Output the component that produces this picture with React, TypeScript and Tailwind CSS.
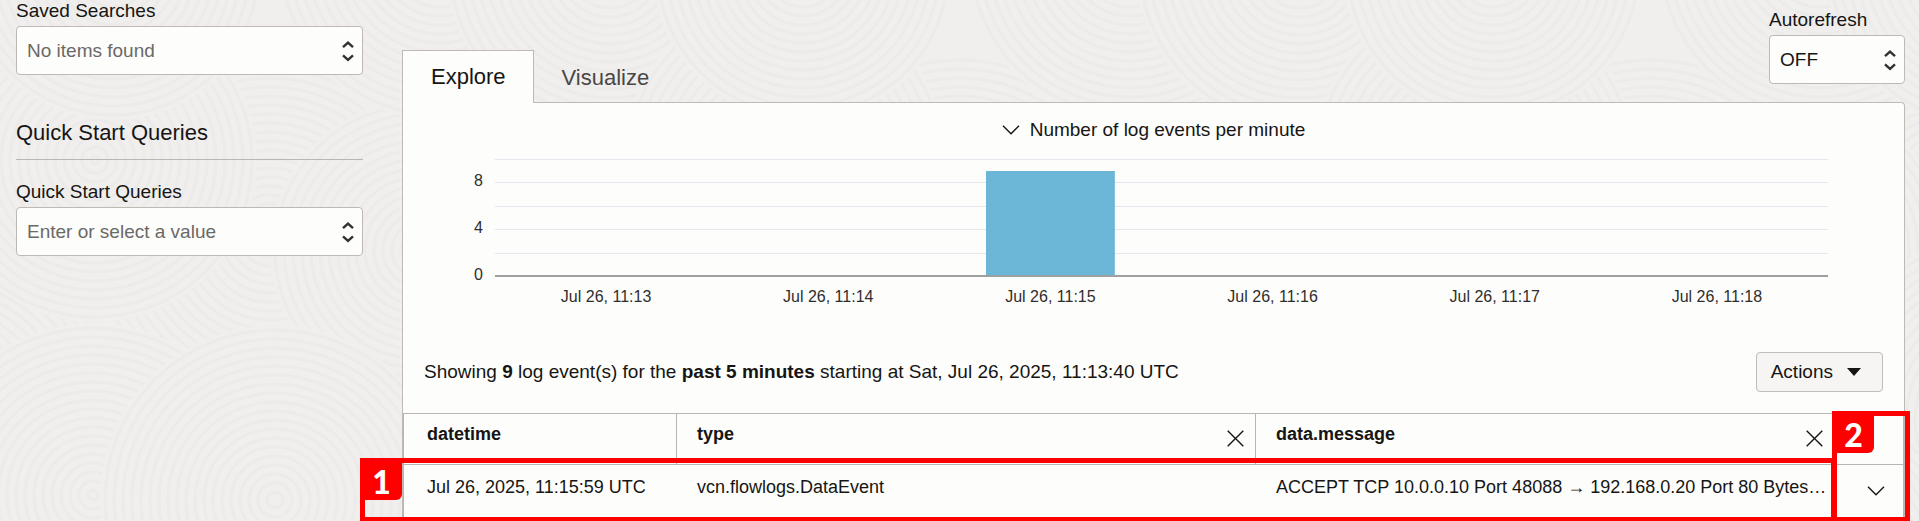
import React, { useState } from 'react';

const logEvents = [
  {
    id: 1,
    datetime: 'Jul 26, 2025, 11:15:59 UTC',
    type: 'vcn.flowlogs.DataEvent',
    message: 'ACCEPT TCP 10.0.0.10 Port 48088 → 192.168.0.20 Port 80 Bytes…',
  },
];

const chartData = [
  { label: 'Jul 26, 11:13', count: 0 },
  { label: 'Jul 26, 11:14', count: 0 },
  { label: 'Jul 26, 11:15', count: 9 },
  { label: 'Jul 26, 11:16', count: 0 },
  { label: 'Jul 26, 11:17', count: 0 },
  { label: 'Jul 26, 11:18', count: 0 },
];

// [cx, cy, radius] of every ring group in one tile, drawn back to front
const ringGroups = [
  [560, 180, 210],
  [270, 235, 180],
  [420, 250, 150],
  [95, 160, 162],
  [113, -30, 150],
  [440, -45, 165],
  [610, -35, 165],
  [630, 420, 190],
  [440, 560, 150],
  [93, 495, 172],
  [275, 500, 175],
];

const TILE_WIDTH = 690;

function Background() {
  return (
    <svg className="absolute inset-0 w-full h-full" aria-hidden="true">
      {[-1, 0, 1, 2].map((tile) =>
        ringGroups.map(([x, cy, r], i) => {
          const cx = x + tile * TILE_WIDTH;
          return (
            <g key={`${tile}-${i}`} stroke="#ecebe9" strokeWidth="3">
              <circle cx={cx} cy={cy} r={r} fill="#f0efee" stroke="none" />
              {Array.from({ length: Math.floor(r / 9) }, (_, n) => (
                <circle key={n} cx={cx} cy={cy} r={r - (n + 1) * 9 + 4} fill="none" />
              ))}
            </g>
          );
        })
      )}
    </svg>
  );
}

function Chevron() {
  return (
    <svg width="18" height="10" viewBox="0 0 18 10" fill="none" stroke="#161513" strokeWidth="1.4">
      <path d="M1 0.8L9 8.8L17 0.8" />
    </svg>
  );
}

function SelectField({ id, label, options, muted = false }: { id: string; label: string; options: string[]; muted?: boolean }) {
  return (
    <div>
      <label htmlFor={id} className="block mb-1 text-[19px] leading-[22px]">
        {label}
      </label>
      <div className="relative">
        <select
          id={id}
          className={`block w-full h-[49px] pl-[10px] pr-9 pt-px appearance-none rounded border border-[#bfb9b4] bg-[#fdfdfc] text-[19px] leading-6 ${
            muted ? 'text-[#6b6966]' : 'text-[#161513]'
          }`}
        >
          {options.map((option) => (
            <option key={option}>{option}</option>
          ))}
        </select>
        <svg
          className="absolute right-[9px] top-[14px] pointer-events-none"
          width="12"
          height="22"
          viewBox="0 0 12 22"
          fill="none"
          stroke="#33302e"
          strokeWidth="2.4"
        >
          <path d="M1 7.2L6 2.6L11 7.2M1 15.3L6 19.9L11 15.3" />
        </svg>
      </div>
    </div>
  );
}

function EventsChart() {
  const step = 100 / chartData.length;
  const yFor = (value: number) => Math.round(118 - value * 11.7);

  return (
    <div className="mt-4 ml-[92px] mr-[76px]">
      <svg className="block w-full h-[160px] overflow-visible text-[16px]" role="img" aria-label="Number of log events per minute">
        {[2, 4, 6, 8, 10].map((v) => (
          <line key={v} x1="0" x2="100%" y1={yFor(v) + 0.5} y2={yFor(v) + 0.5} stroke="#e4e8ec" />
        ))}
        {[0, 4, 8].map((v) => (
          <text key={v} x="-12" y={yFor(v) + 4} textAnchor="end" fill="#302e2c">
            {v}
          </text>
        ))}
        {chartData.map((d, i) => (
          <g key={d.label}>
            {d.count > 0 && (
              <rect
                x={`${(i + 0.21) * step}%`}
                y={yFor(d.count)}
                width={`${step * 0.58}%`}
                height={118 - yFor(d.count)}
                fill="#6cb6d7"
              />
            )}
            <text x={`${(i + 0.5) * step}%`} y="144" textAnchor="middle" fill="#302e2c">
              {d.label}
            </text>
          </g>
        ))}
        <line x1="0" x2="100%" y1="118" y2="118" stroke="#9e9fa0" strokeWidth="2" />
      </svg>
    </div>
  );
}

function RemoveColumnButton({ column }: { column: string }) {
  return (
    <button aria-label={`Remove ${column}`} className="h-12 flex items-center cursor-pointer">
      <svg width="17" height="17" viewBox="0 0 17 17" stroke="#161513" strokeWidth="1.4">
        <path d="M0.7 0.7L16.3 16.3M16.3 0.7L0.7 16.3" />
      </svg>
    </button>
  );
}

function EventsTable() {
  return (
    <table className="w-full table-fixed border-separate border-spacing-0 border-t border-x border-[#b9b6b1] text-[18px] leading-6">
      <thead>
        <tr className="text-left">
          <th className="w-[272px] p-0 pl-[23px] align-top">
            <div className="h-[50px] pt-2">datetime</div>
          </th>
          <th className="p-0 pl-5 pr-[11px] border-l border-[#b9b6b1]">
            <div className="h-[50px] flex justify-between">
              <span className="pt-2">type</span>
              <RemoveColumnButton column="type" />
            </div>
          </th>
          <th className="p-0 pl-5 pr-[11px] border-l border-[#b9b6b1]">
            <div className="h-[50px] flex justify-between">
              <span className="pt-2">data.message</span>
              <RemoveColumnButton column="data.message" />
            </div>
          </th>
          <th className="w-[69px] p-0" aria-label="Details" />
        </tr>
      </thead>
      <tbody>
        {logEvents.map((event) => (
          <tr key={event.id} className="h-[58px] align-top">
            <td className="p-0 pl-[23px] pt-[10px] border-t border-[#b9b6b1] whitespace-nowrap">{event.datetime}</td>
            <td className="p-0 pl-[21px] pt-[10px] border-t border-[#b9b6b1]">{event.type}</td>
            <td className="p-0 pl-[21px] pt-[10px] border-t border-[#b9b6b1] whitespace-nowrap overflow-hidden">
              {event.message}
            </td>
            <td className="p-0 border-t border-[#b9b6b1]">
              <button aria-label="Show details" className="ml-auto mr-[18px] h-[51px] flex items-center cursor-pointer">
                <Chevron />
              </button>
            </td>
          </tr>
        ))}
      </tbody>
    </table>
  );
}

// Numbered red frame that points out a step
function Callout({ step, className }: { step: number; className: string }) {
  return (
    <div className={`absolute border-[5px] border-[#ff0000] pointer-events-none ${className}`}>
      <span className="flex items-center justify-center w-[37px] h-[37px] rounded-br-md bg-[#ff0000] pr-1 font-[Lato,sans-serif] font-black text-[32px] leading-8 text-white">
        {step}
      </span>
    </div>
  );
}

export default function App() {
  const [tab, setTab] = useState('Explore');

  return (
    <div className="relative min-h-screen overflow-hidden bg-[#f0efee] font-['Liberation_Sans',Arial,sans-serif] text-[#161513]">
      <Background />

      <div className="relative flex pl-4 pr-[14px] gap-[39px]">
        <aside className="w-[347px] shrink-0">
          <SelectField id="saved-searches" label="Saved Searches" options={['No items found']} muted />
          <h2 className="mt-11 mb-[21px] pb-3 border-b border-[#b9b6b1] text-[22px] leading-7">Quick Start Queries</h2>
          <SelectField id="quick-start" label="Quick Start Queries" options={['Enter or select a value']} muted />
        </aside>

        <main className="flex-1 min-w-0">
          <div className="flex justify-between">
            <div role="tablist" className="flex items-end text-[22px] leading-7">
              {['Explore', 'Visualize'].map((name) => (
                <button
                  key={name}
                  role="tab"
                  aria-selected={tab === name}
                  onClick={() => setTab(name)}
                  className={
                    tab === name
                      ? 'relative z-10 h-[53px] -mb-px pl-7 pr-[27px] border border-b-0 border-[#bfb9b4] bg-[#fdfdfc]'
                      : 'h-12 pl-7 pr-[27px] text-[#4a4744] cursor-pointer'
                  }
                >
                  {name}
                </button>
              ))}
            </div>
            <div className="w-[136px] pt-[9px] pb-[18px]">
              <SelectField id="autorefresh" label="Autorefresh" options={['OFF']} />
            </div>
          </div>

          <section className="border border-b-0 border-[#bfb9b4] rounded-tr bg-[#fdfdfc]">
            <button className="mt-[15px] mx-auto flex items-center gap-[10px] text-[19px] leading-6 cursor-pointer">
              <Chevron />
              Number of log events per minute
            </button>

            <EventsChart />

            <div className="mt-[34px] mb-[21px] px-[21px] flex items-center justify-between text-[19px] leading-6">
              <p>
                Showing <b>9</b> log event(s) for the <b>past 5 minutes</b> starting at Sat, Jul 26, 2025, 11:13:40 UTC
              </p>
              <button className="h-10 px-[14px] pr-[21px] flex items-center gap-[14px] rounded border border-[#bfbcb9] bg-[#f7f5f4] cursor-pointer">
                Actions
                <svg width="14" height="8" viewBox="0 0 14 8" fill="#161513">
                  <path d="M0 0H14L7 8Z" />
                </svg>
              </button>
            </div>

            <div className="relative">
              <EventsTable />
              <Callout step={1} className="-left-[43px] right-[68px] top-[45px] h-16" />
              <Callout step={2} className="-right-[6px] w-[78px] -top-[2px] h-[111px]" />
            </div>
          </section>
        </main>
      </div>
    </div>
  );
}
